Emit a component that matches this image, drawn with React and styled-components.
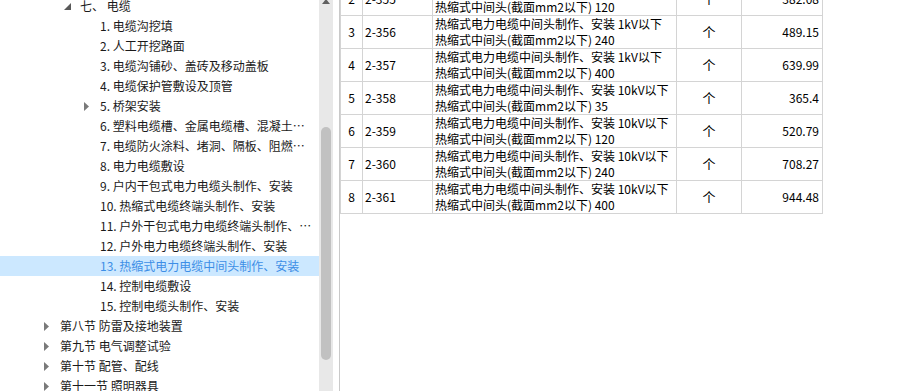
import styled, { createGlobalStyle } from 'styled-components';

const GlobalStyle = createGlobalStyle`
  html, body {
    margin: 0;
    padding: 0;
    background: #fff;
  }
  body {
    font-family: "Noto Sans CJK SC", "Noto Sans", sans-serif;
  }
`;

const treeItems = [
  { level: 2, text: '七、 电缆', toggle: 'open' },
  { level: 3, text: '1. 电缆沟挖填' },
  { level: 3, text: '2. 人工开挖路面' },
  { level: 3, text: '3. 电缆沟铺砂、盖砖及移动盖板' },
  { level: 3, text: '4. 电缆保护管敷设及顶管' },
  { level: 3, text: '5. 桥架安装', toggle: 'closed' },
  { level: 3, text: '6. 塑料电缆槽、金属电缆槽、混凝土电缆槽安装' },
  { level: 3, text: '7. 电缆防火涂料、堵洞、隔板、阻燃槽盒安装' },
  { level: 3, text: '8. 电力电缆敷设' },
  { level: 3, text: '9. 户内干包式电力电缆头制作、安装' },
  { level: 3, text: '10. 热缩式电缆终端头制作、安装' },
  { level: 3, text: '11. 户外干包式电力电缆终端头制作、安装' },
  { level: 3, text: '12. 户外电力电缆终端头制作、安装' },
  { level: 3, text: '13. 热缩式电力电缆中间头制作、安装', selected: true },
  { level: 3, text: '14. 控制电缆敷设' },
  { level: 3, text: '15. 控制电缆头制作、安装' },
  { level: 1, text: '第八节 防雷及接地装置', toggle: 'closed' },
  { level: 1, text: '第九节 电气调整试验', toggle: 'closed' },
  { level: 1, text: '第十节 配管、配线', toggle: 'closed' },
  { level: 1, text: '第十一节 照明器具', toggle: 'closed' },
];

const rows = [
  { no: 2, code: '2-355', kv: '1kV', size: '120', price: '382.08' },
  { no: 3, code: '2-356', kv: '1kV', size: '240', price: '489.15' },
  { no: 4, code: '2-357', kv: '1kV', size: '400', price: '639.99' },
  { no: 5, code: '2-358', kv: '10kV', size: '35', price: '365.4' },
  { no: 6, code: '2-359', kv: '10kV', size: '120', price: '520.79' },
  { no: 7, code: '2-360', kv: '10kV', size: '240', price: '708.27' },
  { no: 8, code: '2-361', kv: '10kV', size: '400', price: '944.48' },
];

const Toggle = ({ type }) => {
  if (type === 'open') {
    return (
      <svg width="7" height="7" viewBox="0 0 7 7">
        <path d="M7 0 L7 7 L0 7 Z" fill="#595959" />
      </svg>
    );
  }
  if (type === 'closed') {
    return (
      <svg width="5" height="9" viewBox="0 0 5 9">
        <path d="M0 0 L5 4.5 L0 9 Z" fill="#7a7a7a" />
      </svg>
    );
  }
  return null;
};

export default function App() {
  return (
    <>
      <GlobalStyle />
      <Screen>
        <TreePane>
          <TreeList>
            {treeItems.map((item) => (
              <TreeRow key={item.text} $level={item.level} $selected={item.selected}>
                <ToggleBox>
                  <Toggle type={item.toggle} />
                </ToggleBox>
                <TreeLabel>{item.text}</TreeLabel>
              </TreeRow>
            ))}
          </TreeList>
        </TreePane>
        <ScrollTrack>
          <ArrowUp />
          <Thumb />
        </ScrollTrack>
        <Gap />
        <TablePane>
          <Grid>
            {rows.map((r) => (
              <Row key={r.no}>
                <IndexCell>{r.no}</IndexCell>
                <CodeCell>{r.code}</CodeCell>
                <NameCell>
                  <span>热缩式电力电缆中间头制作、安装 {r.kv}以下</span>
                  <span>热缩式中间头(截面mm2以下) {r.size}</span>
                </NameCell>
                <UnitCell>个</UnitCell>
                <PriceCell>{r.price}</PriceCell>
              </Row>
            ))}
          </Grid>
        </TablePane>
      </Screen>
    </>
  );
}

const Screen = styled.div`
  display: flex;
  width: 916px;
  height: 391px;
  overflow: hidden;
  background: #fff;
`;

const TreePane = styled.div`
  width: 319px;
  flex-shrink: 0;
  overflow: hidden;
`;

const TreeList = styled.div`
  margin-top: -4px;
  display: flex;
  flex-direction: column;
`;

const TreeRow = styled.div`
  display: flex;
  align-items: center;
  height: 20px;
  padding-left: ${(p) => 40 + (p.$level - 1) * 20}px;
  padding-right: 7px;
  background: ${(p) => (p.$selected ? '#cce8ff' : 'transparent')};
  color: ${(p) => (p.$selected ? '#3d8ee6' : '#1a1a1a')};
  font-size: 12px;
`;

const ToggleBox = styled.div`
  width: 20px;
  flex-shrink: 0;
  display: flex;
  align-items: center;
  padding-left: 4px;
  box-sizing: border-box;
`;

const TreeLabel = styled.span`
  flex: 1;
  min-width: 0;
  white-space: nowrap;
  overflow: hidden;
  text-overflow: ellipsis;
  line-height: 20px;
`;

const ScrollTrack = styled.div`
  width: 14px;
  flex-shrink: 0;
  background: #e8e8e8;
  display: flex;
  flex-direction: column;
  align-items: center;
`;

const ArrowUp = styled.div`
  width: 0;
  height: 0;
  margin-top: -1px;
  border-left: 4px solid transparent;
  border-right: 4px solid transparent;
  border-bottom: 5px solid #606060;
`;

const Thumb = styled.div`
  margin-top: 123px;
  width: 10px;
  height: 233px;
  border-radius: 5px;
  background: #c1c1c1;
`;

const Gap = styled.div`
  width: 6px;
  flex-shrink: 0;
`;

const TablePane = styled.div`
  flex: 1;
  border-left: 1px solid #c9c9c9;
  overflow: hidden;
`;

const Grid = styled.div`
  margin-top: -17px;
  display: flex;
  flex-direction: column;
  width: 482px;
  border-left: 1px solid #d4d4d4;
  font-family: "Noto Sans CJK SC", sans-serif;
  font-size: 12px;
  color: #000;
`;

const Row = styled.div`
  display: grid;
  grid-template-columns: 22px 70px 244px 65px 81px;
  height: 33px;
`;

const Cell = styled.div`
  box-sizing: border-box;
  border-right: 1px solid #d4d4d4;
  border-bottom: 1px solid #d4d4d4;
  display: flex;
  align-items: center;
  white-space: nowrap;
  overflow: hidden;
  line-height: 16px;
`;

const IndexCell = styled(Cell)`
  justify-content: center;
`;

const CodeCell = styled(Cell)`
  padding-left: 2px;
`;

const NameCell = styled(Cell)`
  flex-direction: column;
  align-items: flex-start;
  justify-content: flex-start;
  padding-left: 2px;
`;

const UnitCell = styled(Cell)`
  justify-content: center;
  font-size: 13px;
`;

const PriceCell = styled(Cell)`
  justify-content: flex-end;
  padding-right: 3px;
`;
